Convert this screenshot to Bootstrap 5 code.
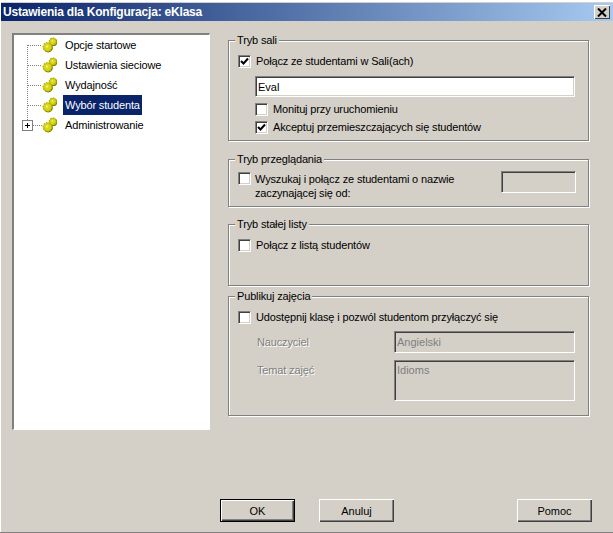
<!DOCTYPE html>
<html lang="pl">
<head>
    <meta charset="UTF-8">
    <meta name="viewport" content="width=device-width, initial-scale=1.0">
    <title>Ustawienia dla Konfiguracja: eKlasa</title>
    <link href="https://cdn.jsdelivr.net/npm/bootstrap@5.3.0/dist/css/bootstrap.min.css" rel="stylesheet">
    <style>
        html, body { height: 100%; }
        body {
            background: #d4d0c8;
            color: #000;
            font-family: "Liberation Sans", Arial, sans-serif;
            font-size: 11px;
            letter-spacing: -0.15px;
            line-height: 14px;
            overflow: hidden;
        }
        .dlg {
            width: 613px;
            height: 533px;
            border-bottom: 1px solid #808080;
            padding-top: 3px;
            box-shadow: inset 0 2px 0 #fff, inset 1px 0 0 #fff;
        }
        .dlg-title {
            height: 18px;
            margin-left: 1px;
            padding: 0 3px 0 2px;
            background: linear-gradient(to right, #0a246a, #a6caf0);
            color: #fff;
            font-weight: 700;
            font-size: 12px;
            letter-spacing: -0.2px;
        }
        .dlg-close {
            width: 16px;
            height: 14px;
            padding: 0;
            border: 0;
            border-radius: 0;
            background: #d4d0c8;
            box-shadow: inset 1px 1px 0 #fff, inset -1px -1px 0 #404040;
        }
        .dlg-body { padding: 12px 24px 0 12px; height: 397px; }
        .tree-panel {
            width: 198px;
            height: 397px;
            flex: none;
            background: #fff;
            border-top: 2px solid #808080;
            border-left: 2px solid #808080;
            border-right: 1px solid #fff;
            border-bottom: 1px solid #fff;
            margin-right: 18px;
        }
        .tree-row { height: 20px; }
        .tree-gutter { width: 28px; height: 20px; flex: none; }
        .tree-gear { width: 16px; height: 16px; flex: none; margin-right: 5px; }
        .tree-label { padding: 0 2px; height: 20px; line-height: 20px; white-space: nowrap; }
        .tree-label-on { background: #0a246a; color: #fff; }
        .groups { width: 361px; padding-top: 7px; }
        .grp {
            position: relative;
            border: 1px solid #808080;
            box-shadow: 1px 1px 0 #fff, inset 1px 1px 0 #fff;
            padding-left: 9px;
        }
        .grp-sali { height: 101px; margin-bottom: 18px; }
        .grp-przeg { height: 48px; margin-bottom: 17px; }
        .grp-lista { height: 62px; margin-bottom: 10px; }
        .grp-publ { height: 120px; }
        .grp-name {
            display: table;
            margin: -8px 0 6px -3px;
            padding: 0 2px;
            background: #d4d0c8;
            line-height: 15px;
        }
        .chk-row { min-height: 14px; }
        .form-check-input.chk {
            width: 13px;
            height: 13px;
            flex: none;
            margin: 0 5px 0 0;
            border-radius: 0;
            border: 1px solid;
            border-color: #808080 #fff #fff #808080;
            box-shadow: inset 1px 1px 0 #404040, inset -1px -1px 0 #d4d0c8;
            background-color: #fff;
            background-size: 9px 9px;
            background-position: center;
        }
        .form-check-input.chk:checked {
            background-color: #fff;
            border-color: #808080 #fff #fff #808080;
            background-image: url("data:image/svg+xml,%3csvg xmlns='http://www.w3.org/2000/svg' viewBox='0 0 9 9'%3e%3cpath fill='none' stroke='%23000' stroke-width='2' d='M1 4l2.5 2.5L8 1.5'/%3e%3c/svg%3e");
        }
        .chk-label { margin: 0; white-space: nowrap; }
        .sunken {
            display: block;
            border-radius: 0;
            border: 1px solid;
            border-color: #808080 #fff #fff #808080;
            box-shadow: inset 1px 1px 0 #404040, inset -1px -1px 0 #d4d0c8;
            padding: 2px 3px 2px 2px;
            font-size: 11px;
            line-height: 14px;
            color: #000;
            background: #fff;
        }
        .sunken:disabled { background: #d4d0c8; color: #808080; }
        .sunken:focus { outline: 0; }
        .room-input { width: 320px; height: 21px; margin: 8px 0 5px 17px; }
        .sub-opts { margin-left: 17px; }
        .sub-opts .chk-row { margin-bottom: 4px; }
        .search-row { margin-top: -1px; }
        .search-label { margin-left: -1px; }
        .name-input { width: 75px; height: 22px; margin: -1px 12px 0 0; padding: 0 3px; }
        .off-label {
            width: 156px;
            padding-left: 19px;
            flex: none;
            color: #808080;
            text-shadow: 1px 1px 0 #fff;
        }
        .publ-check { margin: 1px 0 7px; }
        .teacher-row { margin-bottom: 7px; }
        .topic-label { padding-top: 3px; }
        .teacher-input { width: 181px; height: 22px; }
        .topic-input { width: 181px; height: 41px; resize: none; overflow: hidden; }
        .dlg-foot { padding: 81px 21px 0 220px; }
        .win-btn {
            width: 75px;
            height: 23px;
            padding: 0;
            border: 0;
            border-radius: 0;
            background: #d4d0c8;
            color: #000;
            font-size: 11px;
            box-shadow: inset 1px 1px 0 #fff, inset -1px -1px 0 #404040, inset -2px -2px 0 #808080;
        }
        .win-btn-def {
            box-shadow: inset 0 0 0 1px #000, inset 2px 2px 0 #fff, inset -2px -2px 0 #404040, inset -3px -3px 0 #808080;
        }
    </style>
</head>
<body>
    <svg width="0" height="0" class="d-block">
        <symbol id="gear" viewBox="0 0 16 16">
            <circle cx="6.2" cy="10.7" r="4.7" fill="#77770a"/>
            <circle cx="11.2" cy="5.2" r="3.9" fill="#77770a"/>
            <circle cx="5.5" cy="10" r="4.3" fill="#d8d618" stroke="#b4b206" stroke-width="1.5" stroke-dasharray="1.5 1.1"/>
            <circle cx="10.8" cy="4.5" r="3.4" fill="#d8d618" stroke="#b4b206" stroke-width="1.5" stroke-dasharray="1.5 1.1"/>
            <circle cx="5" cy="9.5" r="1.2" fill="#f2ee6a"/>
            <circle cx="10.5" cy="4" r="1" fill="#f2ee6a"/>
        </symbol>
    </svg>

    <div class="dlg d-flex flex-column">
        <div class="dlg-title d-flex align-items-center justify-content-between flex-none">
            <span>Ustawienia dla Konfiguracja: eKlasa</span>
            <button type="button" class="dlg-close d-flex align-items-center justify-content-center" aria-label="Zamknij">
                <svg width="10" height="9" viewBox="0 0 10 9"><path d="M1 .5l8 8M9 .5l-8 8" stroke="#000" stroke-width="2" fill="none"/></svg>
            </button>
        </div>

        <div class="dlg-body d-flex">
            <div class="tree-panel">
                <div class="tree-row d-flex align-items-center">
                    <svg class="tree-gutter"><path d="M13.5 10v10M14 10.5h14" stroke="#808080" stroke-dasharray="1 1" fill="none"/></svg>
                    <svg class="tree-gear"><use href="#gear"/></svg>
                    <span class="tree-label">Opcje startowe</span>
                </div>
                <div class="tree-row d-flex align-items-center">
                    <svg class="tree-gutter"><path d="M13.5 0v20M14 10.5h14" stroke="#808080" stroke-dasharray="1 1" fill="none"/></svg>
                    <svg class="tree-gear"><use href="#gear"/></svg>
                    <span class="tree-label">Ustawienia sieciowe</span>
                </div>
                <div class="tree-row d-flex align-items-center">
                    <svg class="tree-gutter"><path d="M13.5 0v20M14 10.5h14" stroke="#808080" stroke-dasharray="1 1" fill="none"/></svg>
                    <svg class="tree-gear"><use href="#gear"/></svg>
                    <span class="tree-label">Wydajność</span>
                </div>
                <div class="tree-row d-flex align-items-center">
                    <svg class="tree-gutter"><path d="M13.5 0v20M14 10.5h14" stroke="#808080" stroke-dasharray="1 1" fill="none"/></svg>
                    <svg class="tree-gear"><use href="#gear"/></svg>
                    <span class="tree-label tree-label-on">Wybór studenta</span>
                </div>
                <div class="tree-row d-flex align-items-center">
                    <svg class="tree-gutter">
                        <path d="M13.5 0v5M19 10.5h9" stroke="#808080" stroke-dasharray="1 1" fill="none"/>
                        <rect x="8.5" y="5.5" width="10" height="10" fill="#fff" stroke="#808080"/>
                        <path d="M11 10.5h5M13.5 8v5" stroke="#000" fill="none"/>
                    </svg>
                    <svg class="tree-gear"><use href="#gear"/></svg>
                    <span class="tree-label">Administrowanie</span>
                </div>
            </div>

            <div class="groups">
                <div class="grp grp-sali">
                    <div class="grp-name">Tryb sali</div>
                    <div class="chk-row d-flex align-items-center">
                        <input class="form-check-input chk" type="checkbox" id="c1" checked>
                        <label class="chk-label" for="c1">Połącz ze studentami w Sali(ach)</label>
                    </div>
                    <input class="sunken room-input" type="text" value="Eval">
                    <div class="sub-opts">
                        <div class="chk-row d-flex align-items-center">
                            <input class="form-check-input chk" type="checkbox" id="c2">
                            <label class="chk-label" for="c2">Monituj przy uruchomieniu</label>
                        </div>
                        <div class="chk-row d-flex align-items-center">
                            <input class="form-check-input chk" type="checkbox" id="c3" checked>
                            <label class="chk-label" for="c3">Akceptuj przemieszczających się studentów</label>
                        </div>
                    </div>
                </div>

                <div class="grp grp-przeg">
                    <div class="grp-name">Tryb przeglądania</div>
                    <div class="search-row d-flex align-items-start justify-content-between">
                        <div class="d-flex align-items-start">
                            <input class="form-check-input chk" type="checkbox" id="c4">
                            <label class="chk-label search-label" for="c4">Wyszukaj i połącz ze studentami o nazwie<br>zaczynającej się od:</label>
                        </div>
                        <input class="sunken name-input" type="text" disabled>
                    </div>
                </div>

                <div class="grp grp-lista">
                    <div class="grp-name">Tryb stałej listy</div>
                    <div class="chk-row d-flex align-items-center">
                        <input class="form-check-input chk" type="checkbox" id="c5">
                        <label class="chk-label" for="c5">Połącz z listą studentów</label>
                    </div>
                </div>

                <div class="grp grp-publ">
                    <div class="grp-name">Publikuj zajęcia</div>
                    <div class="chk-row publ-check d-flex align-items-center">
                        <input class="form-check-input chk" type="checkbox" id="c6">
                        <label class="chk-label" for="c6">Udostępnij klasę i pozwól studentom przyłączyć się</label>
                    </div>
                    <div class="teacher-row d-flex align-items-center">
                        <span class="off-label">Nauczyciel</span>
                        <input class="sunken teacher-input" type="text" value="Angielski" disabled>
                    </div>
                    <div class="d-flex align-items-start">
                        <span class="off-label topic-label">Temat zajęć</span>
                        <textarea class="sunken topic-input" disabled>Idioms</textarea>
                    </div>
                </div>
            </div>
        </div>

        <div class="dlg-foot d-flex">
            <button type="button" class="win-btn win-btn-def me-4">OK</button>
            <button type="button" class="win-btn">Anuluj</button>
            <button type="button" class="win-btn ms-auto">Pomoc</button>
        </div>
    </div>

    <script src="https://cdn.jsdelivr.net/npm/bootstrap@5.3.0/dist/js/bootstrap.bundle.min.js"></script>
</body>
</html>
